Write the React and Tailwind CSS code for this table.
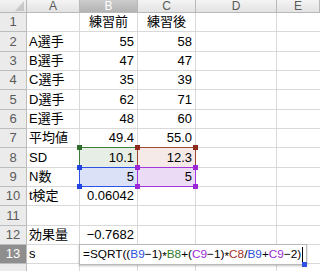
import React from "react";

const FONT = { fontFamily: '"Liberation Sans", "Noto Sans CJK JP", sans-serif' };

const rows = [
  { n: 1, a: "", b: "練習前", c: "練習後", center: true },
  { n: 2, a: "A選手", b: "55", c: "58" },
  { n: 3, a: "B選手", b: "47", c: "47" },
  { n: 4, a: "C選手", b: "35", c: "39" },
  { n: 5, a: "D選手", b: "62", c: "71" },
  { n: 6, a: "E選手", b: "48", c: "60" },
  { n: 7, a: "平均値", b: "49.4", c: "55.0" },
  { n: 8, a: "SD", b: "10.1", c: "12.3" },
  { n: 9, a: "N数", b: "5", c: "5" },
  { n: 10, a: "t検定", b: "0.06042", c: "" },
  { n: 11, a: "", b: "", c: "" },
  { n: 12, a: "効果量", b: "−0.7682", c: "" },
  { n: 13, a: "s", b: "", c: "", editing: true },
  { n: 14, a: "", b: "", c: "", hideLabel: true },
];

// reference highlight for cells named in the formula
const refs = {
  "8-b": { bg: "bg-[#e7eee5]", border: "border-[#3d7d3a]", mark: "bg-[#2f6d2c]" },
  "8-c": { bg: "bg-[#f6eae8]", border: "border-[#a04a36]", mark: "bg-[#8e2c1c]" },
  "9-b": { bg: "bg-[#dbe2f7]", border: "border-[#2f52e4]", mark: "bg-[#1f44e0]" },
  "9-c": { bg: "bg-[#ecdbf4]", border: "border-[#a238dc]", mark: "bg-[#9a26d8]" },
};

function Marks({ cls }) {
  return (
    <>
      <span className={`absolute -left-[3px] -top-[3px] w-[5px] h-[5px] ${cls}`} />
      <span className={`absolute -right-[3px] -top-[3px] w-[5px] h-[5px] ${cls}`} />
      <span className={`absolute -left-[3px] -bottom-[3px] w-[5px] h-[5px] ${cls}`} />
      <span className={`absolute -right-[3px] -bottom-[3px] w-[5px] h-[5px] ${cls}`} />
    </>
  );
}

function Cell({ w, text, align, refStyle }) {
  const just = align === "center" ? "justify-center" : align === "right" ? "justify-end pr-[3px]" : "justify-start pl-[2px]";
  return (
    <div
      className={`relative ${w} h-full shrink-0 border-r border-b border-[#d9d9d9] flex items-end pb-[1px] ${just} ${refStyle ? refStyle.bg : "bg-white"}`}
    >
      {refStyle && (
        <div className={`absolute -left-[1px] -top-[1px] right-[-1px] bottom-[-1px] border ${refStyle.border} z-10`}>
          <Marks cls={refStyle.mark} />
        </div>
      )}
      <span className="relative z-20 text-[13px] leading-[16px] text-black whitespace-nowrap">{text}</span>
    </div>
  );
}

const Star = () => <span className="relative top-[2px]">*</span>;

function Formula() {
  const blue = "text-[#2c4fdc]";
  const purple = "text-[#9b2cd2]";
  const green = "text-[#2e7a2c]";
  const brown = "text-[#a3321f]";
  return (
    <div className="absolute -left-[1px] -top-[1px] w-[228px] h-[21px] bg-white border border-[#b9b9b9] shadow-[0_1px_2px_rgba(0,0,0,0.25)] z-30 flex items-end pb-[2px] pl-[3px]">
      <span className="text-[11.8px] leading-[15px] text-black whitespace-nowrap">
        =SQRT((<span className={blue}>B9</span>−1)<Star />
        <span className={green}>B8</span>+(<span className={purple}>C9</span>−1)<Star />
        <span className={brown}>C8</span>/<span className={blue}>B9</span>+<span className={purple}>C9</span>−2)
      </span>
      <span className="w-[1px] h-[15px] bg-black ml-[1px]" />
      <span className="absolute -right-[1px] -bottom-[3px] w-[5px] h-[5px] bg-[#2f52e4]" />
    </div>
  );
}

export default function App() {
  return (
    <div className="w-[320px] h-[271px] overflow-hidden bg-white select-none" style={FONT}>
      {/* column headers */}
      <div className="flex h-[13px]">
        <div className="relative w-[27px] shrink-0 h-full bg-gradient-to-b from-[#f3f3f3] to-[#e4e4e4] border-r border-b border-[#b8b8b8]">
          <svg className="absolute right-[2px] bottom-[1px]" width="9" height="10" viewBox="0 0 9 10">
            <polygon points="9,0 9,10 0,10" fill="#c9c9c9" />
          </svg>
        </div>
        {[
          ["A", "w-[53px]", false],
          ["B", "w-[58px]", true],
          ["C", "w-[58px]", false],
          ["D", "w-[81px]", false],
          ["E", "flex-1", false],
        ].map(([l, w, sel]) => (
          <div
            key={l}
            className={`${w} shrink-0 h-full flex items-center justify-center border-r border-b border-[#b8b8b8] text-[12px] leading-[12px] ${
              sel
                ? "bg-gradient-to-b from-[#cdcdcd] to-[#b3b3b3] text-white"
                : "bg-gradient-to-b from-[#f4f4f4] to-[#e3e3e3] text-[#5a5a5a]"
            }`}
          >
            {l}
          </div>
        ))}
      </div>

      {rows.map((r) => (
        <div key={r.n} className="flex h-[19.33px]">
          <div
            className={`w-[27px] shrink-0 h-full flex items-end justify-center pb-[2px] border-r border-b border-[#bdbdbd] text-[13px] leading-[15px] ${
              r.editing ? "bg-[#8e8e8e] text-white" : "bg-[#ebebeb] text-[#5a5a5a]"
            }`}
          >
            {r.hideLabel ? "" : r.n}
          </div>
          <Cell w="w-[53px]" text={r.a} align="left" />
          <div className="relative w-[58px] shrink-0 h-full">
            <Cell w="w-[58px]" text={r.b} align={r.center ? "center" : "right"} refStyle={refs[`${r.n}-b`]} />
            {r.editing && <Formula />}
          </div>
          <Cell w="w-[58px]" text={r.c} align={r.center ? "center" : "right"} refStyle={refs[`${r.n}-c`]} />
          <Cell w="w-[81px]" text="" align="left" />
          <div className="flex-1 h-full border-b border-[#d9d9d9] bg-white" />
        </div>
      ))}
    </div>
  );
}
